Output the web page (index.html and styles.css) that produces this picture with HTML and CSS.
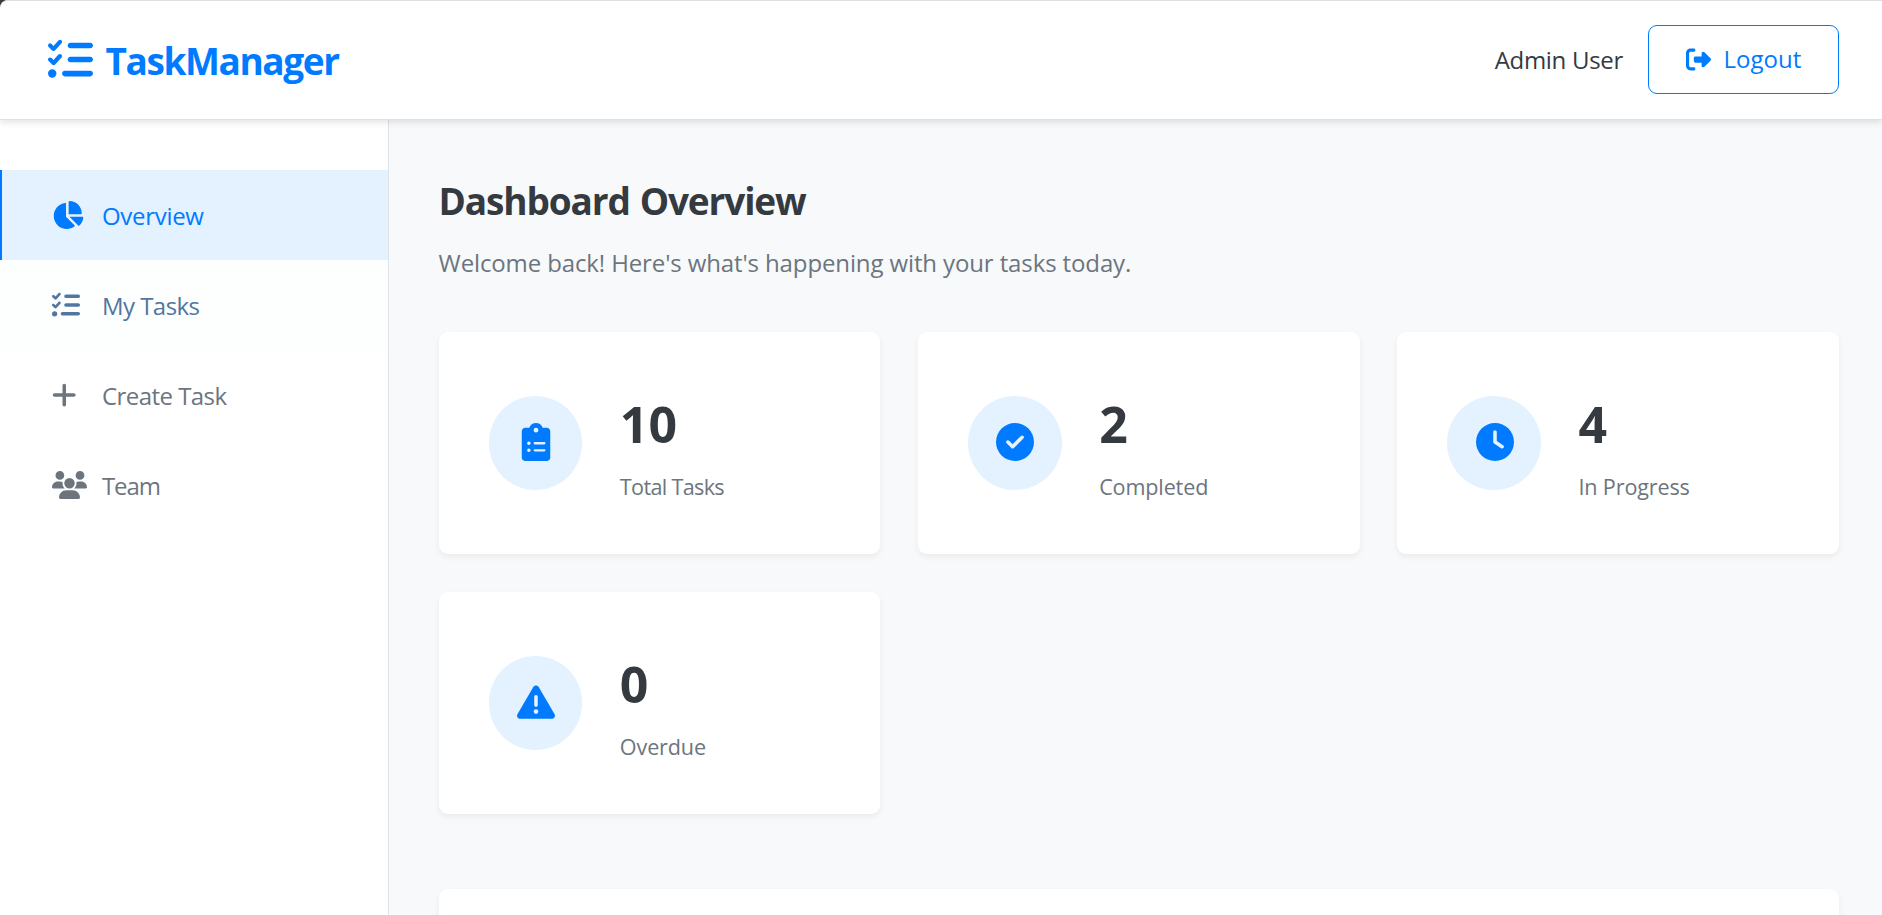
FILE: index.html
```html
<!DOCTYPE html>
<html lang="en">
<head>
<meta charset="utf-8">
<title>TaskManager</title>
<link rel="stylesheet" href="styles.css">
</head>
<body>
<svg class="sprite" aria-hidden="true">
  <symbol id="list-check" viewBox="0 0 512 512"><path d="M152.1 38.2c9.9 8.9 10.7 24 1.8 33.9l-72 80c-4.4 4.9-10.6 7.8-17.2 7.9s-12.9-2.4-17.6-7L7 113C-2.3 103.6-2.3 88.4 7 79s24.6-9.4 33.9 0l22.1 22.1 55.1-61.2c8.9-9.9 24-10.7 33.9-1.8zm0 160c9.9 8.9 10.7 24 1.8 33.9l-72 80c-4.4 4.9-10.6 7.8-17.2 7.9s-12.9-2.4-17.6-7L7 273c-9.4-9.4-9.4-24.6 0-33.9s24.6-9.4 33.9 0l22.1 22.1 55.1-61.2c8.9-9.9 24-10.7 33.9-1.8zM224 96c0-17.7 14.3-32 32-32H480c17.7 0 32 14.3 32 32s-14.3 32-32 32H256c-17.7 0-32-14.3-32-32zm0 160c0-17.7 14.3-32 32-32H480c17.7 0 32 14.3 32 32s-14.3 32-32 32H256c-17.7 0-32-14.3-32-32zM160 416c0-17.7 14.3-32 32-32H480c17.7 0 32 14.3 32 32s-14.3 32-32 32H192c-17.7 0-32-14.3-32-32zM48 368a48 48 0 1 1 0 96 48 48 0 1 1 0-96z"/></symbol>
  <symbol id="chart-pie" viewBox="0 0 576 512"><path d="M304 240V16.6c0-9 7-16.6 16-16.6C443.7 0 544 100.3 544 224c0 9-7.6 16-16.6 16H304zM32 272C32 150.7 122.1 50.3 239 34.3c9.2-1.3 17 6.1 17 15.4V288L412.5 444.5c6.7 6.7 6.2 17.7-1.5 23.1C371.8 495.6 323.8 512 272 512C139.5 512 32 404.6 32 272zm526.4 16c9.3 0 16.6 7.8 15.4 17c-7.7 55.9-34.6 105.6-73.9 142.3c-6 5.6-15.4 5.2-21.2-.7L320 288H558.4z"/></symbol>
  <symbol id="plus" viewBox="0 0 448 512"><path d="M256 80c0-17.7-14.3-32-32-32s-32 14.3-32 32V224H48c-17.7 0-32 14.3-32 32s14.3 32 32 32H192V432c0 17.7 14.3 32 32 32s32-14.3 32-32V288H400c17.7 0 32-14.3 32-32s-14.3-32-32-32H256V80z"/></symbol>
  <symbol id="users" viewBox="0 0 640 512"><path d="M144 0a80 80 0 1 1 0 160A80 80 0 1 1 144 0zM512 0a80 80 0 1 1 0 160A80 80 0 1 1 512 0zM0 298.7C0 239.8 47.8 192 106.7 192h42.7c15.9 0 31 3.5 44.6 9.7c-1.3 7.2-1.9 14.7-1.9 22.3c0 38.2 16.8 72.5 43.3 96c-.2 0-.4 0-.7 0H21.3C9.6 320 0 310.4 0 298.7zM405.3 320c-.2 0-.4 0-.7 0c26.6-23.5 43.3-57.8 43.3-96c0-7.6-.7-15-1.9-22.3c13.6-6.3 28.7-9.7 44.6-9.7h42.7C592.2 192 640 239.8 640 298.7c0 11.8-9.6 21.3-21.3 21.3H405.3zM224 224a96 96 0 1 1 192 0 96 96 0 1 1-192 0zM128 485.3C128 411.7 187.7 352 261.3 352H378.7C452.3 352 512 411.7 512 485.3c0 14.7-11.9 26.7-26.7 26.7H154.7c-14.7 0-26.7-11.9-26.7-26.7z"/></symbol>
  <symbol id="logout" viewBox="0 0 512 512"><path d="M377.9 105.9L500.7 228.7c7.2 7.2 11.3 17.1 11.3 27.3s-4.1 20.1-11.3 27.3L377.9 406.1c-6.4 6.4-15 9.9-24 9.9c-18.7 0-33.9-15.2-33.9-33.9l0-62.1-128 0c-17.7 0-32-14.3-32-32l0-64c0-17.7 14.3-32 32-32l128 0 0-62.1c0-18.7 15.2-33.9 33.9-33.9c9 0 17.6 3.6 24 9.9zM160 96L96 96c-17.7 0-32 14.3-32 32l0 256c0 17.7 14.3 32 32 32l64 0c17.7 0 32 14.3 32 32s-14.3 32-32 32l-64 0c-53 0-96-43-96-96L0 128C0 75 43 32 96 32l64 0c17.7 0 32 14.3 32 32s-14.3 32-32 32z"/></symbol>
  <symbol id="clipboard" viewBox="0 0 384 512"><path d="M192 0c-41.8 0-77.4 26.7-90.5 64H48C21.5 64 0 85.5 0 112V464c0 26.5 21.5 48 48 48H336c26.5 0 48-21.5 48-48V112c0-26.5-21.5-48-48-48H282.5C269.4 26.7 233.8 0 192 0zm0 64a32 32 0 1 1 0 64 32 32 0 1 1 0-64zM72 272a24 24 0 1 1 48 0 24 24 0 1 1 -48 0zm104-16H304c8.8 0 16 7.2 16 16s-7.2 16-16 16H176c-8.8 0-16-7.2-16-16s7.2-16 16-16zM72 368a24 24 0 1 1 48 0 24 24 0 1 1 -48 0zm88 0c0-8.8 7.2-16 16-16H304c8.8 0 16 7.2 16 16s-7.2 16-16 16H176c-8.8 0-16-7.2-16-16z"/></symbol>
  <symbol id="check" viewBox="0 0 512 512"><path d="M256 512A256 256 0 1 0 256 0a256 256 0 1 0 0 512zM369 209L241 337c-9.4 9.4-24.6 9.4-33.9 0l-64-64c-9.4-9.4-9.4-24.6 0-33.9s24.6-9.4 33.9 0l47 47L335 175c9.4-9.4 24.6-9.4 33.9 0s9.4 24.6 0 33.9z"/></symbol>
  <symbol id="clock" viewBox="0 0 512 512"><path d="M256 0a256 256 0 1 1 0 512A256 256 0 1 1 256 0zM232 120V256c0 8 4 15.5 10.7 20l96 64c11 7.4 25.9 4.4 33.3-6.7s4.4-25.9-6.7-33.3L280 243.2V120c0-13.3-10.7-24-24-24s-24 10.7-24 24z"/></symbol>
  <symbol id="warning" viewBox="0 0 512 512"><path d="M256 32c14.2 0 27.3 7.5 34.5 19.8l216 368c7.3 12.4 7.3 27.7 .2 40.1S486.3 480 472 480H40c-14.3 0-27.6-7.7-34.7-20.1s-7-27.8 .2-40.1l216-368C228.7 39.5 241.8 32 256 32zm0 128c-13.3 0-24 10.7-24 24V296c0 13.3 10.7 24 24 24s24-10.7 24-24V184c0-13.3-10.7-24-24-24zm32 224a32 32 0 1 0 -64 0 32 32 0 1 0 64 0z"/></symbol>
</svg>

<div class="app">
  <header class="header">
    <div class="logo">
      <svg class="logo-icon"><use href="#list-check"/></svg>
      <span class="logo-text">TaskManager</span>
    </div>
    <div class="account">
      <span class="user-name">Admin User</span>
      <button class="logout" type="button">
        <svg class="logout-icon"><use href="#logout"/></svg>
        <span class="logout-text">Logout</span>
      </button>
    </div>
  </header>

  <div class="layout">
    <nav class="sidebar">
      <a class="nav-item nav-active"><span class="nav-icon"><svg class="w-pie"><use href="#chart-pie"/></svg></span><span class="nav-text">Overview</span></a>
      <a class="nav-item nav-hover"><span class="nav-icon"><svg class="w-list"><use href="#list-check"/></svg></span><span class="nav-text nav-text-snug">My Tasks</span></a>
      <a class="nav-item"><span class="nav-icon"><svg class="w-plus"><use href="#plus"/></svg></span><span class="nav-text nav-text-snug">Create Task</span></a>
      <a class="nav-item"><span class="nav-icon"><svg class="w-users"><use href="#users"/></svg></span><span class="nav-text nav-text-tight">Team</span></a>
    </nav>

    <main class="content">
      <h1 class="title">Dashboard Overview</h1>
      <p class="subtitle">Welcome back! Here's what's happening with your tasks today.</p>

      <section class="stats">
        <article class="card">
          <div class="badge"><svg class="badge-icon"><use href="#clipboard"/></svg></div>
          <div class="stat"><div class="number">10</div><div class="label label-tight">Total Tasks</div></div>
        </article>
        <article class="card">
          <div class="badge"><svg class="badge-icon"><use href="#check"/></svg></div>
          <div class="stat"><div class="number">2</div><div class="label">Completed</div></div>
        </article>
        <article class="card">
          <div class="badge"><svg class="badge-icon"><use href="#clock"/></svg></div>
          <div class="stat"><div class="number">4</div><div class="label">In Progress</div></div>
        </article>
        <article class="card">
          <div class="badge"><svg class="badge-icon"><use href="#warning"/></svg></div>
          <div class="stat"><div class="number">0</div><div class="label">Overdue</div></div>
        </article>
      </section>

      <section class="panel"></section>
    </main>
  </div>
</div>
</body>
</html>
```
FILE: styles.css
```css
* { box-sizing: border-box; }

body {
  margin: 0;
  height: 915px;
  overflow: hidden;
  background: #3c3c3c;
  font-family: "Open Sans", "Noto Sans", sans-serif;
  font-size: 24px;
  color: #343a40;
}

svg { display: block; fill: currentColor; flex: none; }
.sprite { display: none; }

.app {
  display: flex;
  flex-direction: column;
  height: 915px;
  overflow: hidden;
  background: #f8f9fb;
  border-top-left-radius: 8px;
}

.header {
  position: relative;
  z-index: 1;
  flex: none;
  display: flex;
  align-items: center;
  justify-content: space-between;
  height: 120px;
  padding: 0 43px 0 48px;
  background: #fff;
  border-top: 1px solid #dedfe1;
  border-bottom: 1px solid #dee2e6;
  border-top-left-radius: 8px;
  box-shadow: 0 3px 6px rgba(0, 0, 0, 0.1);
}

.logo { display: flex; align-items: center; gap: 12.5px; color: #007bff; }
.logo-icon { width: 45px; height: 45px; margin-bottom: 1px; }
.logo-text { font-size: 37px; font-weight: 700; letter-spacing: -1.4px; }

.account { display: flex; align-items: center; gap: 25px; padding-bottom: 2px; }
.user-name { letter-spacing: -0.3px; }

.logout {
  display: flex;
  align-items: center;
  gap: 12.5px;
  width: 191px;
  height: 69px;
  padding: 0 0 0 37px;
  background: #fff;
  border: 1px solid #007bff;
  border-radius: 9px;
  color: #007bff;
  font: inherit;
}
.logout-icon { width: 25px; height: 25px; }
.logout-text { padding-bottom: 2px; }

.layout { flex: 1; display: flex; min-height: 0; }

.sidebar {
  flex: none;
  width: 389px;
  padding-top: 50px;
  background: #fff;
  border-right: 1px solid #dee2e6;
}

.nav-item {
  display: flex;
  align-items: center;
  gap: 12.5px;
  height: 90px;
  padding-left: 50px;
  border-left: 2px solid transparent;
  color: #6c757d;
}
.nav-active { background: #e4f2ff; border-left-color: #007bff; color: #007bff; }
.nav-hover { background: #fdfffe; color: #5176a0; }
.nav-icon { width: 37.5px; padding-bottom: 1px; }
.nav-icon svg { height: 28px; }
.w-pie { width: 31.5px; }
.w-list { width: 28px; }
.w-plus { width: 24.5px; }
.w-users { width: 35px; }
.nav-text { padding-top: 1px; letter-spacing: -0.3px; }
.nav-text-snug { letter-spacing: -0.55px; }
.nav-text-tight { letter-spacing: -1.1px; }

.content { flex: 1; padding: 50px 43px 0 49.6px; }

.title {
  margin: 0 0 12px;
  font-size: 37px;
  font-weight: 700;
  line-height: 61px;
  letter-spacing: -1.14px;
  word-spacing: 1.5px;
}

.subtitle {
  margin: 0 0 49px;
  line-height: 40px;
  letter-spacing: -0.12px;
  color: #6c757d;
}

.stats {
  display: grid;
  grid-template-columns: repeat(3, 1fr);
  grid-auto-rows: 222px;
  gap: 38px 37.5px;
  margin-bottom: 75px;
}

.card {
  display: flex;
  align-items: center;
  gap: 37.5px;
  padding: 0 50px;
  background: #fff;
  border-radius: 9px;
  box-shadow: 0 3px 6px rgba(0, 0, 0, 0.06);
}

.badge {
  flex: none;
  display: flex;
  align-items: center;
  justify-content: center;
  width: 93.75px;
  height: 93.75px;
  padding: 0 0 2px 1px;
  border-radius: 50%;
  background: #e4f2ff;
  color: #007bff;
}
.badge-icon { width: 38px; height: 38px; }

.number { padding-top: 1px; font-size: 50px; font-weight: 700; line-height: 80px; }
.label {
  margin-top: 5px;
  font-size: 21.6px;
  line-height: 35px;
  letter-spacing: -0.15px;
  color: #6c757d;
}
.label-tight { letter-spacing: -0.67px; }

.panel {
  height: 200px;
  background: #fff;
  border-radius: 9px;
  box-shadow: 0 3px 6px rgba(0, 0, 0, 0.06);
}
```
